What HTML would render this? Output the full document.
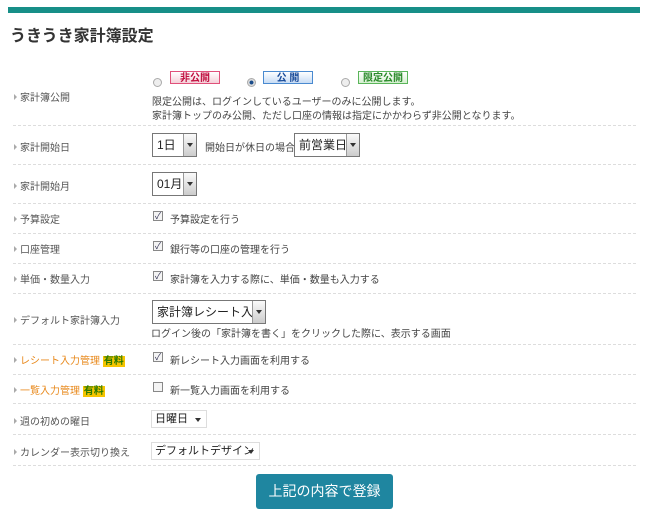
<!DOCTYPE html>
<html><head><meta charset="utf-8"><style>
body{margin:0;width:650px;height:523px;background:#fff;position:relative;font-family:"Liberation Sans","Noto Sans CJK JP",sans-serif;font-size:10px;color:#444;overflow:hidden}
.a{position:absolute;white-space:nowrap}
.bar{left:8px;top:7px;width:632px;height:6px;background:#178f88}
.t{left:10px;top:22px;font-size:16px;font-weight:bold;color:#333}
.sep{left:13px;width:623px;height:0;border-top:1px dashed #ddd}
.lb{left:14px;font-size:10px;color:#555}
.lb:before{content:"";display:inline-block;width:0;height:0;border-left:3px solid #aaa;border-top:3px solid transparent;border-bottom:3px solid transparent;margin-right:3px;vertical-align:1px}
.or{color:#e8891c}
.paid{background:#f5c400;color:#2a7a00;font-weight:bold;padding:0 1px}
.bd{height:13px;line-height:13px;text-align:center;font-size:10px;font-weight:bold;box-sizing:border-box;width:50px}
.rd{width:9px;height:9px;border-radius:50%;border:1px solid #aaa;background:#eee;box-sizing:border-box}
.sel{border:1px solid #777;background:#fff;box-sizing:border-box;height:24px;font-size:12px;color:#222;line-height:22px;padding-left:4px}
.sel .b{position:absolute;right:0;top:0;width:12px;height:22px;border-left:1px solid #999;background:linear-gradient(#fafafa,#ccc)}
.sel .b:after{content:"";position:absolute;left:3px;top:9px;border-top:4px solid #333;border-left:3px solid transparent;border-right:3px solid transparent}
.s2{border:1px solid #ddd;background:#fff;box-sizing:border-box;height:18px;font-size:11px;color:#222;line-height:16px;padding-left:3px}
.s2:after{content:"";position:absolute;right:5px;top:7px;border-top:4px solid #333;border-left:3px solid transparent;border-right:3px solid transparent}
.cb{width:10px;height:10px;border:1px solid #888;background:#f4f4f4;box-sizing:border-box;font-size:9px;line-height:8px;text-align:center;color:#335}
.tx{font-size:10px;color:#444}
.btn{left:256px;top:474px;width:137px;height:35px;background:#1f86a0;border-radius:3px;color:#fff;font-size:14px;line-height:35px;text-align:center}
</style></head><body>
<div class="a bar"></div>
<div class="a t">うきうき家計簿設定</div>

<div class="a lb" style="top:89px">家計簿公開</div>
<div class="a rd" style="left:153px;top:78px"></div>
<div class="a bd" style="left:170px;top:71px;border:1px solid #e0507a;background:linear-gradient(#fff,#f5d0d8);color:#c01040">非公開</div>
<div class="a rd" style="left:247px;top:78px;background:radial-gradient(#1a4c8a 35%,#ddd 45%)"></div>
<div class="a bd" style="left:263px;top:71px;border:1px solid #4a8ad0;background:linear-gradient(#fff,#c8dcf5);color:#1a4c9a">公 開</div>
<div class="a rd" style="left:341px;top:78px"></div>
<div class="a bd" style="left:358px;top:71px;border:1px solid #5ab55a;background:linear-gradient(#fff,#d5f0d0);color:#2a8a2a">限定公開</div>
<div class="a tx" style="left:152px;top:93px">限定公開は、ログインしているユーザーのみに公開します。</div>
<div class="a tx" style="left:152px;top:107px">家計簿トップのみ公開、ただし口座の情報は指定にかかわらず非公開となります。</div>
<div class="a sep" style="top:125px"></div>

<div class="a lb" style="top:139px">家計開始日</div>
<div class="a sel" style="left:152px;top:133px;width:45px">1日<span class="b"></span></div>
<div class="a tx" style="left:205px;top:139px">開始日が休日の場合</div>
<div class="a sel" style="left:294px;top:133px;width:66px">前営業日<span class="b"></span></div>
<div class="a sep" style="top:164px"></div>

<div class="a lb" style="top:178px">家計開始月</div>
<div class="a sel" style="left:152px;top:172px;width:45px">01月<span class="b"></span></div>
<div class="a sep" style="top:203px"></div>

<div class="a lb" style="top:211px">予算設定</div>
<div class="a cb" style="left:153px;top:211px">✓</div>
<div class="a tx" style="left:170px;top:211px">予算設定を行う</div>
<div class="a sep" style="top:233px"></div>

<div class="a lb" style="top:241px">口座管理</div>
<div class="a cb" style="left:153px;top:241px">✓</div>
<div class="a tx" style="left:170px;top:241px">銀行等の口座の管理を行う</div>
<div class="a sep" style="top:263px"></div>

<div class="a lb" style="top:271px">単価・数量入力</div>
<div class="a cb" style="left:153px;top:271px">✓</div>
<div class="a tx" style="left:170px;top:271px">家計簿を入力する際に、単価・数量も入力する</div>
<div class="a sep" style="top:293px"></div>

<div class="a lb" style="top:312px">デフォルト家計簿入力</div>
<div class="a sel" style="left:152px;top:300px;width:114px">家計簿レシート入力<span class="b"></span></div>
<div class="a tx" style="left:151px;top:325px">ログイン後の「家計簿を書く」をクリックした際に、表示する画面</div>
<div class="a sep" style="top:344px"></div>

<div class="a lb or" style="top:352px">レシート入力管理 <span class="paid">有料</span></div>
<div class="a cb" style="left:153px;top:352px">✓</div>
<div class="a tx" style="left:170px;top:352px">新レシート入力画面を利用する</div>
<div class="a sep" style="top:374px"></div>

<div class="a lb or" style="top:382px">一覧入力管理 <span class="paid">有料</span></div>
<div class="a cb" style="left:153px;top:382px"></div>
<div class="a tx" style="left:170px;top:382px">新一覧入力画面を利用する</div>
<div class="a sep" style="top:403px"></div>

<div class="a lb" style="top:413px">週の初めの曜日</div>
<div class="a s2" style="left:151px;top:410px;width:56px">日曜日</div>
<div class="a sep" style="top:434px"></div>

<div class="a lb" style="top:444px">カレンダー表示切り換え</div>
<div class="a s2" style="left:151px;top:442px;width:109px">デフォルトデザイン</div>
<div class="a sep" style="top:465px"></div>

<div class="a btn">上記の内容で登録</div>
</body></html>
